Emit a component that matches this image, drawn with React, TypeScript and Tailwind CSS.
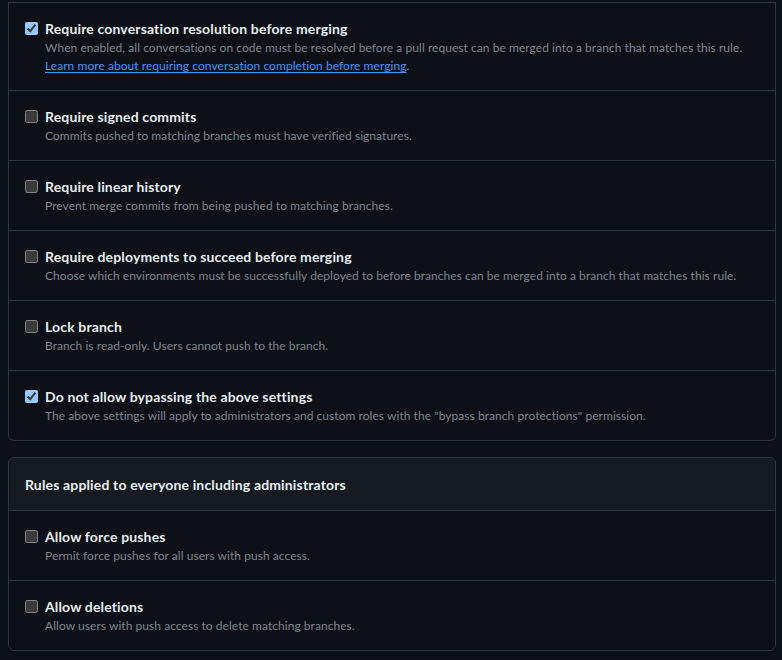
import React from 'react';

type Rule = {
  title: string;
  desc: React.ReactNode;
  checked?: boolean;
};

const mainRules: Rule[] = [
  {
    title: 'Require conversation resolution before merging',
    checked: true,
    desc: (
      <>
        When enabled, all conversations on code must be resolved before a pull request can be merged into a branch that matches this rule.
        <br />
        <a href="#" className="text-[#4493f8] underline underline-offset-2">
          Learn more about requiring conversation completion before merging
        </a>
        .
      </>
    ),
  },
  { title: 'Require signed commits', desc: 'Commits pushed to matching branches must have verified signatures.' },
  { title: 'Require linear history', desc: 'Prevent merge commits from being pushed to matching branches.' },
  {
    title: 'Require deployments to succeed before merging',
    desc: 'Choose which environments must be successfully deployed to before branches can be merged into a branch that matches this rule.',
  },
  { title: 'Lock branch', desc: 'Branch is read-only. Users cannot push to the branch.' },
  {
    title: 'Do not allow bypassing the above settings',
    checked: true,
    desc: 'The above settings will apply to administrators and custom roles with the "bypass branch protections" permission.',
  },
];

const everyoneRules: Rule[] = [
  { title: 'Allow force pushes', desc: 'Permit force pushes for all users with push access.' },
  { title: 'Allow deletions', desc: 'Allow users with push access to delete matching branches.' },
];

function RuleRow({ rule }: { rule: Rule }) {
  return (
    <div className="flex gap-[7px] border-t border-[#30363d] px-4 pt-4 pb-[15px]">
      <input
        type="checkbox"
        defaultChecked={rule.checked}
        className="m-0 mt-[3px] h-[13px] w-[13px] shrink-0 [color-scheme:dark]"
      />
      <div className="min-w-0">
        <div className="text-sm font-bold leading-5 tracking-[0.15px] text-[#e6edf3]">{rule.title}</div>
        <div className="text-xs leading-[18px] tracking-[0.05px] text-[#7d8590]">{rule.desc}</div>
      </div>
    </div>
  );
}

export default function App() {
  return (
    <div
      className="min-h-[660px] bg-[#0d1117] pl-2 pt-[2px]"
      style={{ fontFamily: 'Lato, "Noto Sans", sans-serif' }}
    >
      <div className="w-[768px] rounded-b-md border-x border-b border-[#30363d]">
        {mainRules.map((r) => (
          <RuleRow key={r.title} rule={r} />
        ))}
      </div>

      <div className="mt-4 w-[768px] overflow-hidden rounded-md border border-[#30363d]">
        <div className="bg-[#161b22] px-4 pt-[17px] pb-[15px] text-sm font-bold leading-5 tracking-[0.15px] text-[#e6edf3]">
          Rules applied to everyone including administrators
        </div>
        {everyoneRules.map((r) => (
          <RuleRow key={r.title} rule={r} />
        ))}
      </div>
    </div>
  );
}
